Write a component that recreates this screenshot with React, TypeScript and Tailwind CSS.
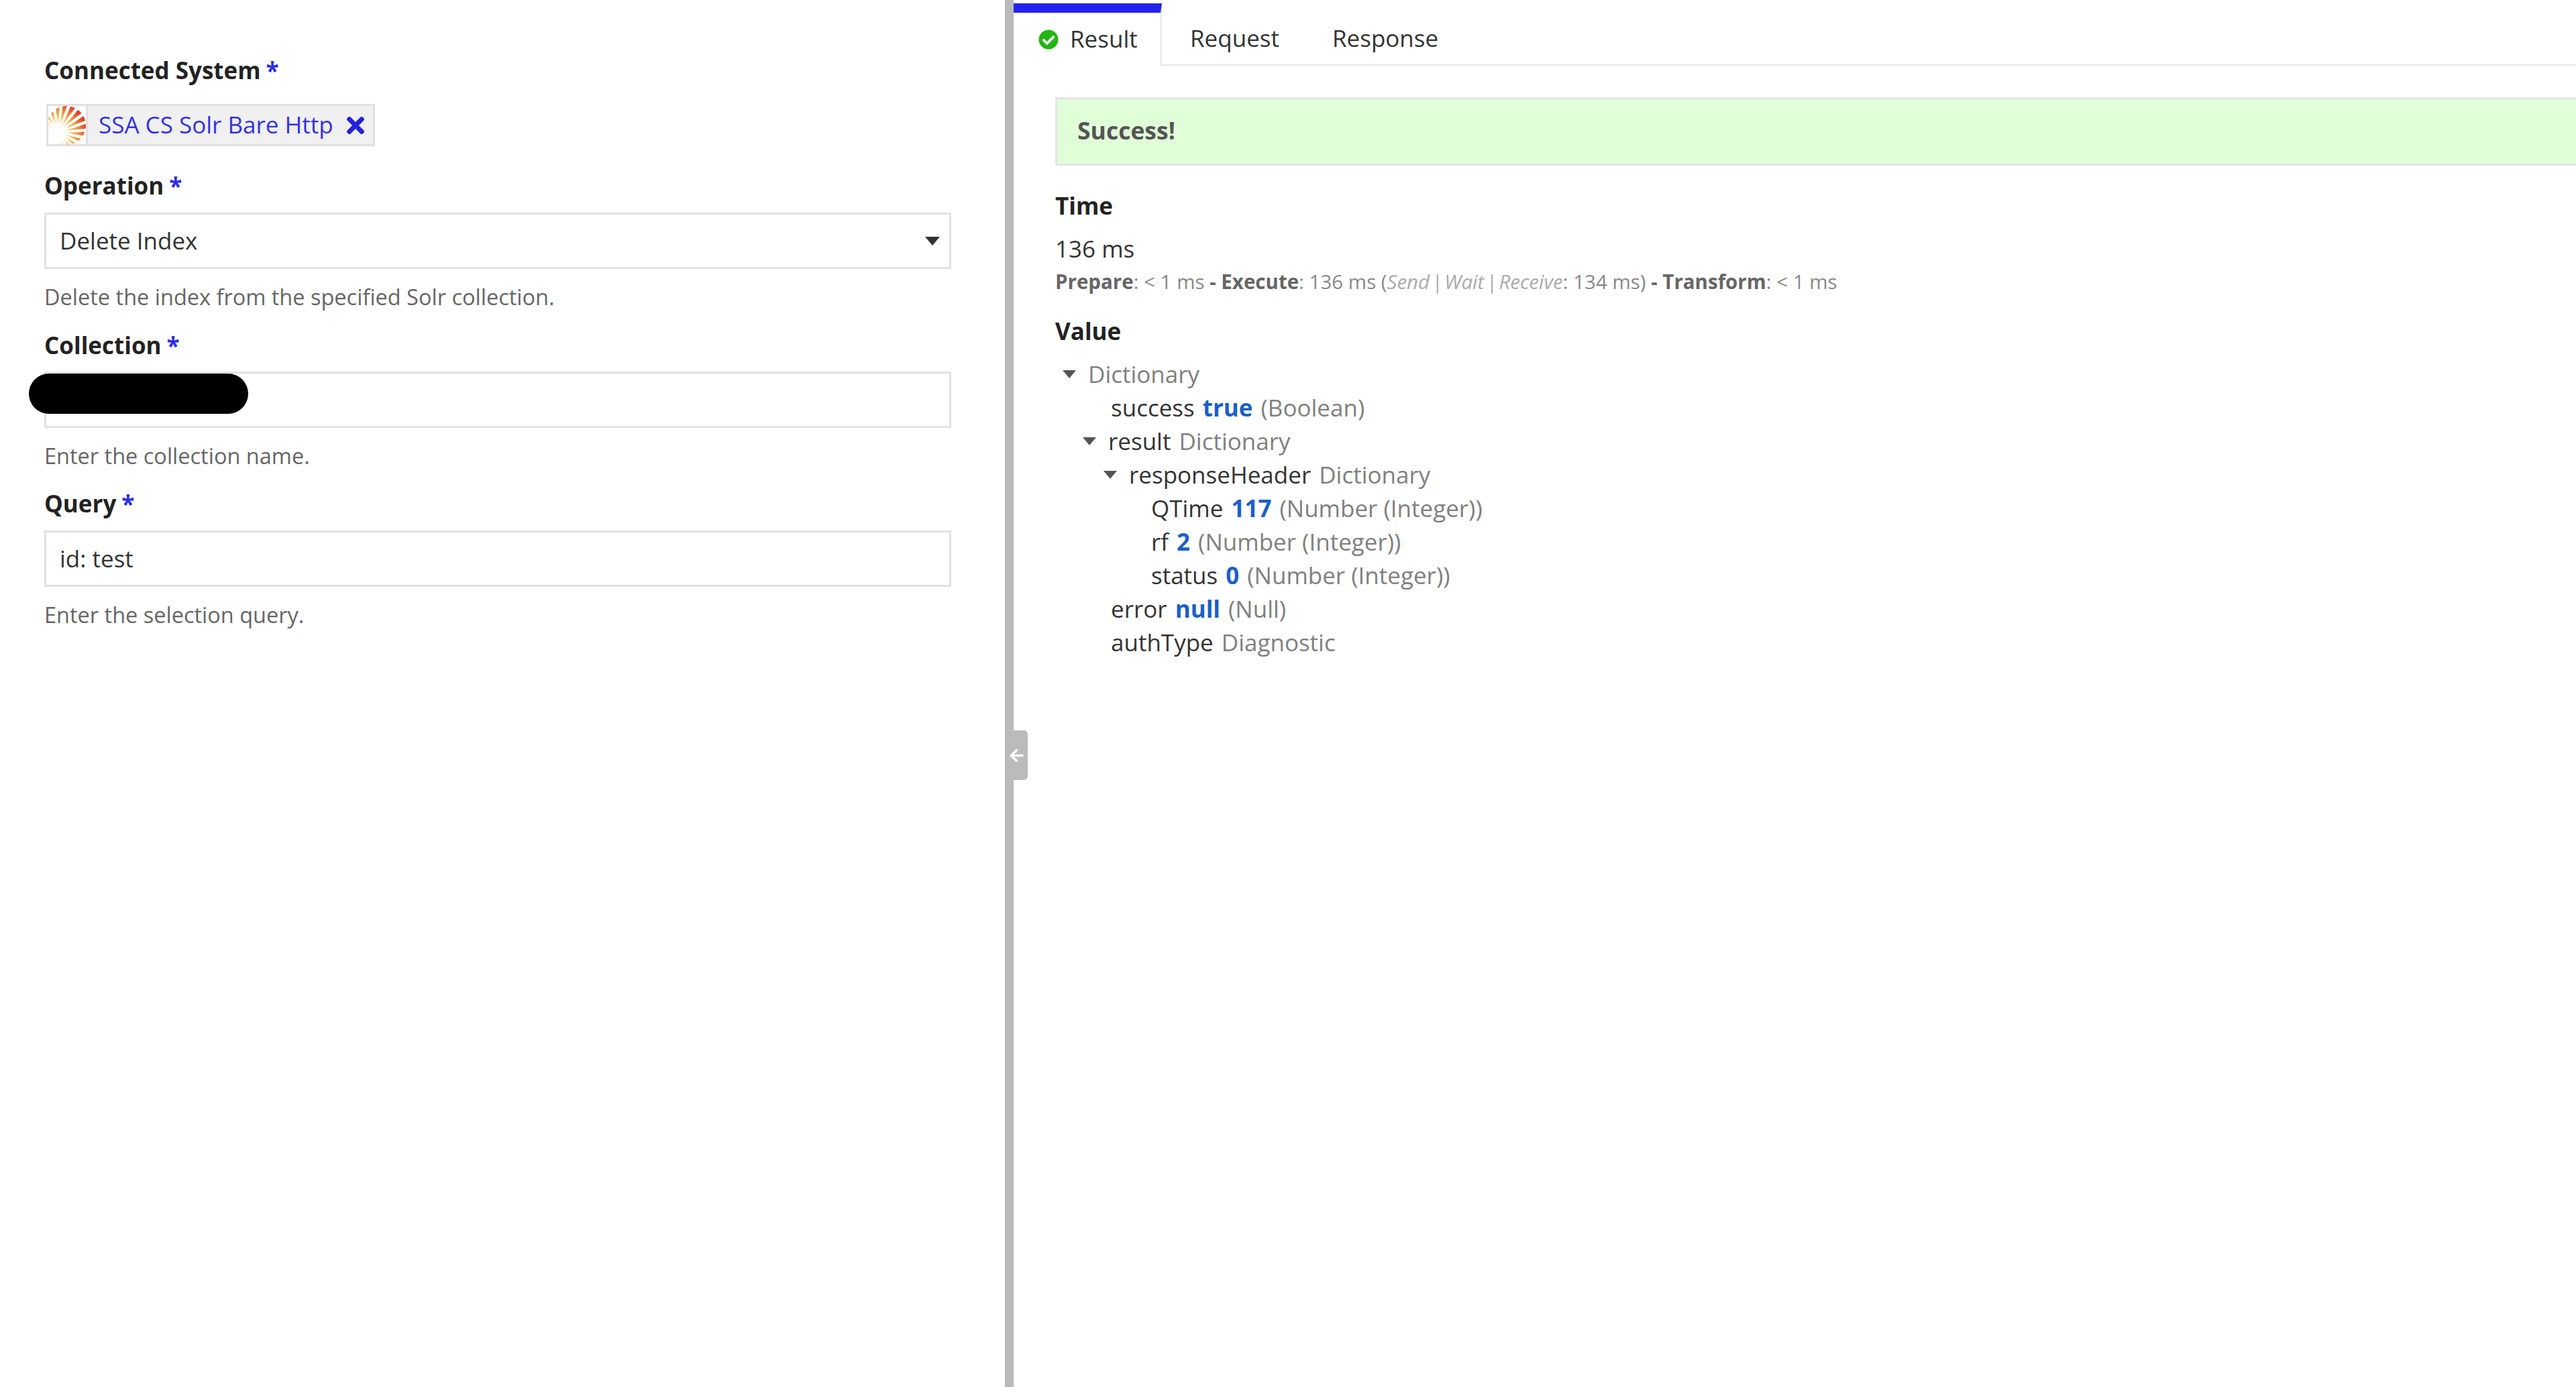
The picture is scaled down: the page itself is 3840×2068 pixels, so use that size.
import { FaArrowLeft, FaCheckCircle, FaTimes } from 'react-icons/fa';

const rays = [-140, -124, -108, -92, -76, -60, -44, -28, -12, 4, 20, 36, 52, 72];

function SolrLogo() {
    return (
        <svg width="56" height="60" viewBox="0 0 56 60" className="block">
            <defs>
                <radialGradient id="sun" gradientUnits="userSpaceOnUse" cx="8" cy="45" r="50">
                    <stop offset="0.15" stopColor="#fff6cf" />
                    <stop offset="0.45" stopColor="#f9d078" />
                    <stop offset="0.75" stopColor="#ee9440" />
                    <stop offset="1" stopColor="#d9402a" />
                </radialGradient>
                <clipPath id="shell">
                    <circle cx="27" cy="30" r="29" />
                </clipPath>
            </defs>
            <g clipPath="url(#shell)">
                {rays.map((a) => {
                    const r = (a * Math.PI) / 180;
                    const w = 0.09;
                    const x1 = 15 + 11 * Math.cos(r);
                    const y1 = 40 + 11 * Math.sin(r);
                    const x2 = 15 + 60 * Math.cos(r - w);
                    const y2 = 40 + 60 * Math.sin(r - w);
                    const x3 = 15 + 60 * Math.cos(r + w);
                    const y3 = 40 + 60 * Math.sin(r + w);
                    return <path key={a} d={`M${x1} ${y1}L${x2} ${y2}L${x3} ${y3}Z`} fill="url(#sun)" />;
                })}
            </g>
        </svg>
    );
}

function Req() {
    return <span className="text-[#2b2bea] font-bold ml-[8px]">*</span>;
}

function Triangle() {
    return <span className="block w-0 h-0 border-x-[10px] border-x-transparent border-t-[12px] border-t-[#555]" />;
}

const label = 'h-[46px] leading-[46px] text-[35px] font-bold text-[#222]';
const help = 'h-[46px] leading-[46px] text-[32.5px] text-[#666]';
const field = 'h-[84px] w-[1352px] border-[3px] border-[#e2e2e2] pl-[20px] text-[35px] leading-[78px] text-[#333]';

function TreeRow({ indent, open, name, value, type }: { indent: number; open?: boolean; name?: string; value?: string; type?: string }) {
    return (
        <div className="h-[50px] leading-[50px] flex items-center whitespace-pre" style={{ paddingLeft: indent }}>
            {open && <span className="mr-[18px]"><Triangle /></span>}
            {name && <span className="text-[#333] mr-[12px]">{name}</span>}
            {value && <span className="text-[#1b5fc9] font-bold mr-[12px]">{value}</span>}
            {type && <span className="text-[#808080]">{type}</span>}
        </div>
    );
}

export default function App() {
    return (
        <div className="h-[2068px] w-[3840px] overflow-hidden flex bg-white font-['Open_Sans',sans-serif]">
            <div className="w-[1498px] pl-[66px] pt-[82px] shrink-0">
                <div className={label}>Connected System<Req /></div>
                <div className="mt-[27px] ml-[3px] w-[490px] h-[63px] border-[3px] border-[#e0e0e0] bg-[#f0f0f0] flex items-center">
                    <div className="w-[59px] h-full bg-white border-r-[3px] border-[#e0e0e0] flex items-center">
                        <SolrLogo />
                    </div>
                    <span className="ml-[16px] text-[35px] text-[#3333e0] whitespace-nowrap">SSA CS Solr Bare Http</span>
                    <FaTimes className="ml-[14px] shrink-0 text-[#2222dd]" size={38} />
                </div>
                <div className={`${label} mt-[36px]`}>Operation<Req /></div>
                <div className={`${field} mt-[17px] flex items-center justify-between pr-[14px]`}>
                    <span>Delete Index</span>
                    <span className="w-0 h-0 border-x-[11px] border-x-transparent border-t-[13px] border-t-[#333]" />
                </div>
                <div className={`${help} mt-[19px]`}>Delete the index from the specified Solr collection.</div>
                <div className={`${label} mt-[26px]`}>Collection<Req /></div>
                <div className={`${field} mt-[16px] relative`}>
                    <div className="absolute left-[-26px] top-[0px] w-[327px] h-[60px] rounded-full bg-black" />
                </div>
                <div className={`${help} mt-[19px]`}>Enter the collection name.</div>
                <div className={`${label} mt-[25px]`}>Query<Req /></div>
                <div className={`${field} mt-[17px]`}>id: test</div>
                <div className={`${help} mt-[19px]`}>Enter the selection query.</div>
            </div>
            <div className="w-[13px] shrink-0 bg-[#bbbbbb] relative">
                <div className="absolute left-[13px] top-[1089px] w-[21px] h-[74px] rounded-r-[6px] bg-[#bbbbbb] flex items-center">
                    <FaArrowLeft className="text-white ml-[-7px]" size={23} />
                </div>
            </div>
            <div className="flex-1 min-w-0">
                <div className="flex h-[98px] pt-[5px]">
                    <div className="w-[221px] border-t-[14px] border-t-[#2222ee] border-r-[2px] border-r-[#e6e6e6] flex items-center pl-[37px] text-[35px] text-[#333]">
                        <FaCheckCircle className="text-[#22b512]" size={30} />
                        <span className="ml-[17px]">Result</span>
                    </div>
                    <div className="flex-1 border-b-[2px] border-[#e6e6e6] flex items-center text-[35px] text-[#333] pt-[14px]">
                        <span className="ml-[42px]">Request</span>
                        <span className="ml-[79px]">Response</span>
                    </div>
                </div>
                <div className="pl-[62px] pt-[47px]">
                    <div className="h-[102px] border-[3px] border-r-0 border-[#e4e4e4] bg-[#e0ffd8] flex items-center pl-[30px] pb-[2px] text-[35.5px] font-bold text-[#555]">Success!</div>
                    <div className={`${label} mt-[37px]`}>Time</div>
                    <div className="mt-[18px] text-[35px] leading-[46px] text-[#333]">136 ms</div>
                    <div className="mt-[6px] text-[29.5px] leading-[40px] text-[#888] whitespace-nowrap">
                        <b className="text-[#666]">Prepare</b>: &lt; 1 ms <b className="text-[#666]">- Execute</b>: 136 ms (<i className="text-[#aaa]">Send&#8202;|&#8202;Wait&#8202;|&#8202;Receive</i>: 134 ms) <b className="text-[#666]">- Transform</b>: &lt; 1 ms
                    </div>
                    <div className={`${label} mt-[31px]`}>Value</div>
                    <div className="mt-[16px] text-[35px]">
                        <TreeRow indent={11} open type="Dictionary" />
                        <TreeRow indent={83} name="success" value="true" type="(Boolean)" />
                        <TreeRow indent={41} open name="result" type="Dictionary" />
                        <TreeRow indent={72} open name="responseHeader" type="Dictionary" />
                        <TreeRow indent={143} name="QTime" value="117" type="(Number (Integer))" />
                        <TreeRow indent={143} name="rf" value="2" type="(Number (Integer))" />
                        <TreeRow indent={143} name="status" value="0" type="(Number (Integer))" />
                        <TreeRow indent={83} name="error" value="null" type="(Null)" />
                        <TreeRow indent={83} name="authType" type="Diagnostic" />
                    </div>
                </div>
            </div>
        </div>
    );
}
